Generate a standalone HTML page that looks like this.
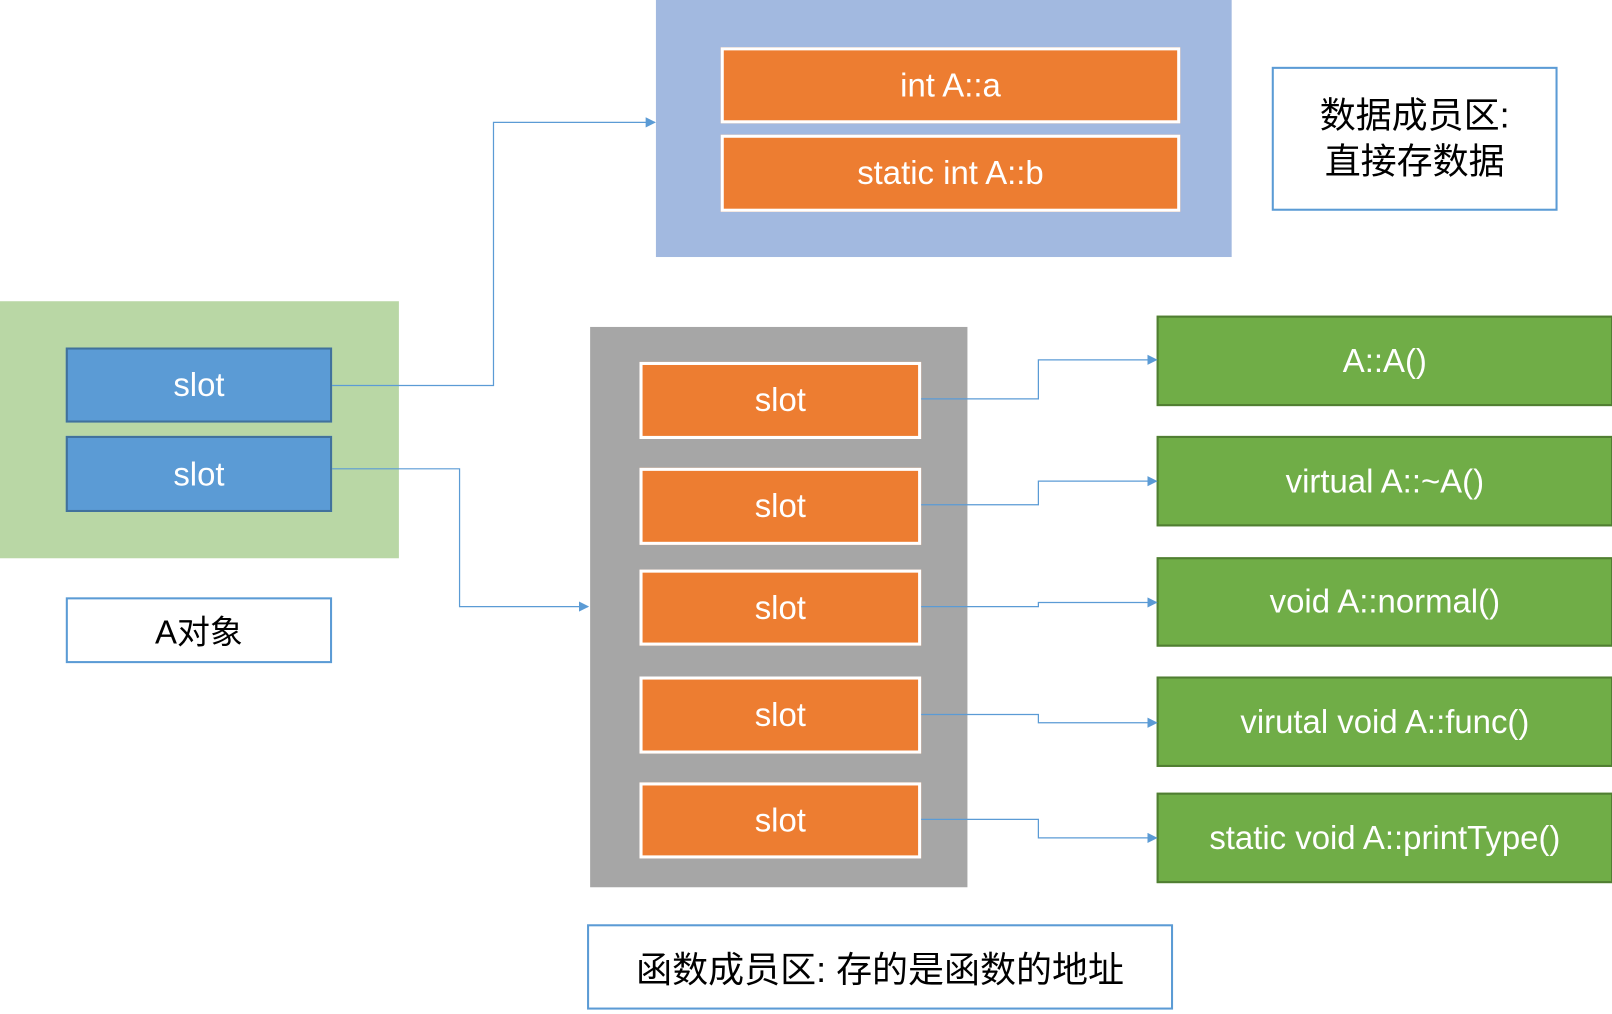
<html><head><style>
body{margin:0;width:1612px;height:1013px;background:#fff;position:relative;overflow:hidden;font-family:"Liberation Sans","Noto Sans CJK SC",sans-serif}
#c{position:absolute;left:0;top:0;width:1568px;height:986px;transform:scale(1.0281);transform-origin:0 0}
.a{position:absolute;box-sizing:border-box;display:flex;align-items:center;justify-content:center;color:#fff;font-size:32px}
.b{background:#5b9bd5;border:2px solid #41719c}
.o{background:#ed7d31;border:3px solid #fff}
.g{background:#70ad47;border:2px solid #507e32}
.w{background:#fff;border:2px solid #5b9bd5;color:#000}
</style></head><body><div id="c">
<div class="a" style="left:0;top:293px;width:388px;height:250px;background:#b9d7a5"></div>
<div class="a b" style="left:64px;top:338px;width:259px;height:73px">slot</div>
<div class="a b" style="left:64px;top:424px;width:259px;height:74px">slot</div>
<div class="a w" style="left:64px;top:581px;width:259px;height:64px">A对象</div>
<div class="a" style="left:638px;top:0;width:560px;height:250px;background:#a2b9e0"></div>
<div class="a o" style="left:701px;top:46px;width:447px;height:74px">int A::a</div>
<div class="a o" style="left:701px;top:131px;width:447px;height:75px">static int A::b</div>
<div class="a w" style="left:1237px;top:65px;width:278px;height:140px;line-height:1.3;text-align:center;font-size:35px">数据成员区:<br>直接存数据</div>
<div class="a" style="left:574px;top:318px;width:367px;height:545px;background:#a6a6a6"></div>
<div class="a o" style="left:622px;top:352px;width:274px;height:75px">slot</div>
<div class="a o" style="left:622px;top:455px;width:274px;height:75px">slot</div>
<div class="a o" style="left:622px;top:554px;width:274px;height:74px">slot</div>
<div class="a o" style="left:622px;top:658px;width:274px;height:75px">slot</div>
<div class="a o" style="left:622px;top:761px;width:274px;height:74px">slot</div>
<div class="a g" style="left:1125px;top:307px;width:444px;height:88px">A::A()</div>
<div class="a g" style="left:1125px;top:424px;width:444px;height:88px">virtual A::~A()</div>
<div class="a g" style="left:1125px;top:542px;width:444px;height:87px">void A::normal()</div>
<div class="a g" style="left:1125px;top:658px;width:444px;height:88px">virutal void A::func()</div>
<div class="a g" style="left:1125px;top:771px;width:444px;height:88px">static void A::printType()</div>
<div class="a w" style="left:571px;top:899px;width:570px;height:83px;font-size:35px">函数成员区: 存的是函数的地址</div>
<svg width="1568" height="986" style="position:absolute;left:0;top:0">
<defs><marker id="m" markerWidth="10" markerHeight="10" refX="9" refY="5" orient="auto" markerUnits="userSpaceOnUse"><path d="M0,0L10,5L0,10z" fill="#5b9bd5"/></marker></defs>
<g fill="none" stroke="#5b9bd5" stroke-width="1.2" marker-end="url(#m)">
<path d="M323,375H480V119H637"/>
<path d="M323,456H447V590H572"/>
<path d="M896,388H1010V350H1125"/>
<path d="M896,491H1010V468H1125"/>
<path d="M896,590H1010V586H1125"/>
<path d="M896,695H1010V703H1125"/>
<path d="M896,797H1010V815H1125"/>
</g></svg>
</div></body></html>
